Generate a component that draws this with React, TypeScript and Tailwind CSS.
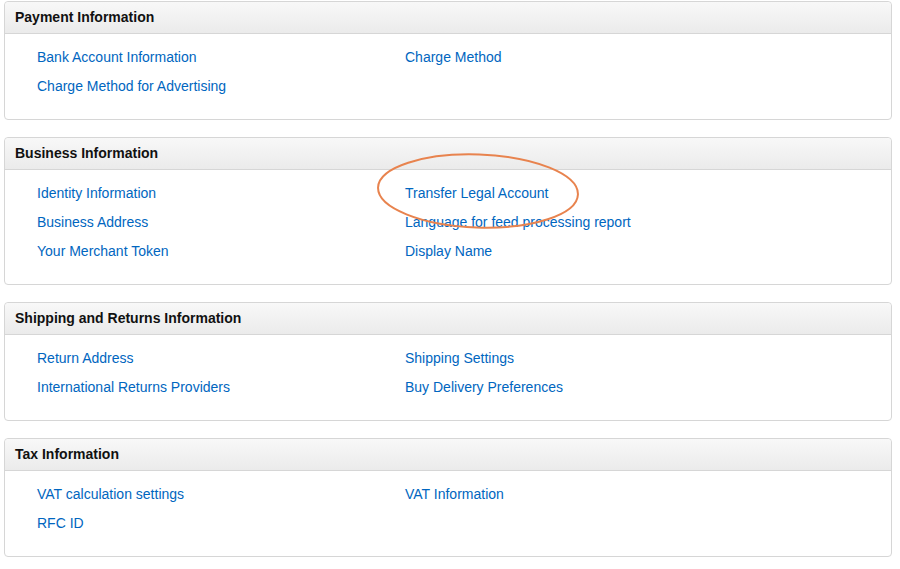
const sections = [
  {
    title: 'Payment Information',
    left: ['Bank Account Information', 'Charge Method for Advertising'],
    right: ['Charge Method'],
  },
  {
    title: 'Business Information',
    left: ['Identity Information', 'Business Address', 'Your Merchant Token'],
    right: ['Transfer Legal Account', 'Language for feed processing report', 'Display Name'],
  },
  {
    title: 'Shipping and Returns Information',
    left: ['Return Address', 'International Returns Providers'],
    right: ['Shipping Settings', 'Buy Delivery Preferences'],
  },
  {
    title: 'Tax Information',
    left: ['VAT calculation settings', 'RFC ID'],
    right: ['VAT Information'],
  },
];

function LinkList({ items }: { items: string[] }) {
  return (
    <ul>
      {items.map((item) => (
        <li key={item} className="flex h-[29px] items-center">
          <a href="#" className="text-[14px] text-[#0066c0]">
            {item}
          </a>
        </li>
      ))}
    </ul>
  );
}

export default function App() {
  return (
    <div
      className="relative min-h-[569px] bg-white pl-[4px] pr-[8px] pt-[1px]"
      style={{ fontFamily: '"Liberation Sans", Arial, sans-serif' }}
    >
      <div className="flex flex-col gap-[17px]">
        {sections.map((s) => (
          <div key={s.title} className="rounded-[4px] border border-[#d6d6d6] bg-white">
            <div className="flex h-[32px] items-center rounded-t-[4px] border-b border-[#d6d6d6] bg-gradient-to-b from-[#f8f8f8] to-[#ebebeb] pl-[10px]">
              <h3 className="text-[14px] font-bold text-[#111]">{s.title}</h3>
            </div>
            <div className="grid grid-cols-[368px_1fr] pb-[18px] pl-[32px] pt-[9px]">
              <LinkList items={s.left} />
              <LinkList items={s.right} />
            </div>
          </div>
        ))}
      </div>
      <svg
        className="pointer-events-none absolute left-[370px] top-[148px]"
        width="220"
        height="88"
        viewBox="0 0 220 88"
      >
        <ellipse
          cx="108"
          cy="43"
          rx="100"
          ry="36.5"
          transform="rotate(2 108 43)"
          fill="none"
          stroke="#e8834e"
          strokeWidth="2"
        />
      </svg>
    </div>
  );
}
